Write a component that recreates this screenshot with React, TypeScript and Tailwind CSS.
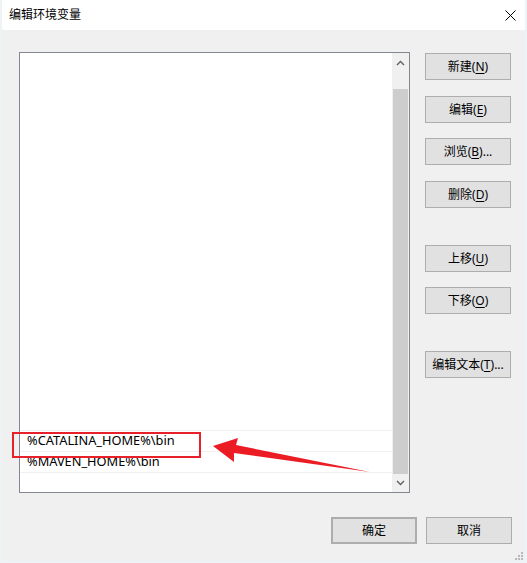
import React from "react"

const font = { fontFamily: '"Noto Sans", "Noto Sans CJK SC", sans-serif' }

type Btn = { label: string; key: string; tail?: string; mt: string }

const sideButtons: Btn[] = [
  { label: "新建", key: "N", mt: "mt-0" },
  { label: "编辑", key: "E", mt: "mt-[16px]" },
  { label: "浏览", key: "B", tail: "...", mt: "mt-[15px]" },
  { label: "删除", key: "D", mt: "mt-[16px]" },
  { label: "上移", key: "U", mt: "mt-[37px]" },
  { label: "下移", key: "O", mt: "mt-[15px]" },
  { label: "编辑文本", key: "T", tail: "...", mt: "mt-[37px]" },
]

function WinButton({ label, k, tail, className = "" }: { label: string; k?: string; tail?: string; className?: string }) {
  return (
    <button className={`flex h-[27px] w-[86px] items-center justify-center border border-[#adadad] bg-[#e1e1e1] text-[12px] text-black ${className}`}>
      {label}
      {k && (
        <>
          (<span className="underline underline-offset-2">{k}</span>)
        </>
      )}
      {tail}
    </button>
  )
}

function Row({ text }: { text: string }) {
  return (
    <div className="flex h-[21px] items-center border-t border-[#f0f0f0] pl-[7px] text-[12.8px] text-black">
      {text}
    </div>
  )
}

export default function App() {
  return (
    <div className="relative h-[563px] w-[527px] overflow-hidden bg-[#eef3f6]" style={font}>
      <div className="ml-[2px] flex h-[561px] w-[523px] flex-col bg-[#f0f0f0]">
        {/* title bar */}
        <div className="flex h-[30px] items-center justify-between bg-white pl-[7px] pr-[9px]">
          <span className="text-[12px] text-black">编辑环境变量</span>
          <svg width="11" height="11" viewBox="0 0 11 11">
            <path d="M0.5 0.5 L10.5 10.5 M10.5 0.5 L0.5 10.5" stroke="#000" strokeWidth="1" />
          </svg>
        </div>

        <div className="flex pl-[17px] pt-[22px]">
          {/* list box */}
          <div className="flex h-[441px] w-[391px] border border-[#828790] bg-white">
            <div className="flex flex-1 flex-col">
              <div className="flex-1" />
              <Row text="%CATALINA_HOME%\bin" />
              <Row text="%MAVEN_HOME%\bin" />
              <div className="h-[20px] border-t border-[#f0f0f0]" />
            </div>
            {/* scrollbar */}
            <div className="flex w-[17px] flex-col bg-[#f0f0f0]">
              <div className="flex h-[20px] items-center justify-center">
                <svg width="9" height="6" viewBox="0 0 9 6">
                  <path d="M1 5 L4.5 1.5 L8 5" fill="none" stroke="#606060" strokeWidth="1.4" />
                </svg>
              </div>
              <div className="h-[16px]" />
              <div className="mx-[1px] flex-1 bg-[#cdcdcd]" />
              <div className="flex h-[18px] items-center justify-center">
                <svg width="9" height="6" viewBox="0 0 9 6">
                  <path d="M1 1 L4.5 4.5 L8 1" fill="none" stroke="#606060" strokeWidth="1.4" />
                </svg>
              </div>
            </div>
          </div>

          {/* side buttons */}
          <div className="ml-[15px] flex flex-col pt-[1px]">
            {sideButtons.map((b) => (
              <WinButton key={b.label} label={b.label} k={b.key} tail={b.tail} className={b.mt} />
            ))}
          </div>
        </div>

        {/* bottom buttons */}
        <div className="mt-[24px] flex justify-end gap-[9px] pr-[13px]">
          <WinButton label="确定" className="border-2 border-[#0078d7]" />
          <WinButton label="取消" />
        </div>

        <div className="mt-auto flex justify-end pb-[1px] pr-[2px]">
          <svg width="8" height="8" viewBox="0 0 8 8">
            <g fill="#b8b8b8">
              <rect x="6" y="0" width="2" height="2" />
              <rect x="3" y="3" width="2" height="2" />
              <rect x="6" y="3" width="2" height="2" />
              <rect x="0" y="6" width="2" height="2" />
              <rect x="3" y="6" width="2" height="2" />
              <rect x="6" y="6" width="2" height="2" />
            </g>
          </svg>
        </div>
      </div>

      {/* annotation: highlight box */}
      <div className="absolute left-[12px] top-[432px] h-[26px] w-[189px] border-2 border-[#e8202a]" />

      {/* annotation: arrow */}
      <svg className="absolute left-0 top-0" width="527" height="563" viewBox="0 0 527 563">
        <path d="M213 446 L238 438 L236 445 L370 472 L234 453 L234 462 Z" fill="#ec1c24" />
      </svg>
    </div>
  )
}
